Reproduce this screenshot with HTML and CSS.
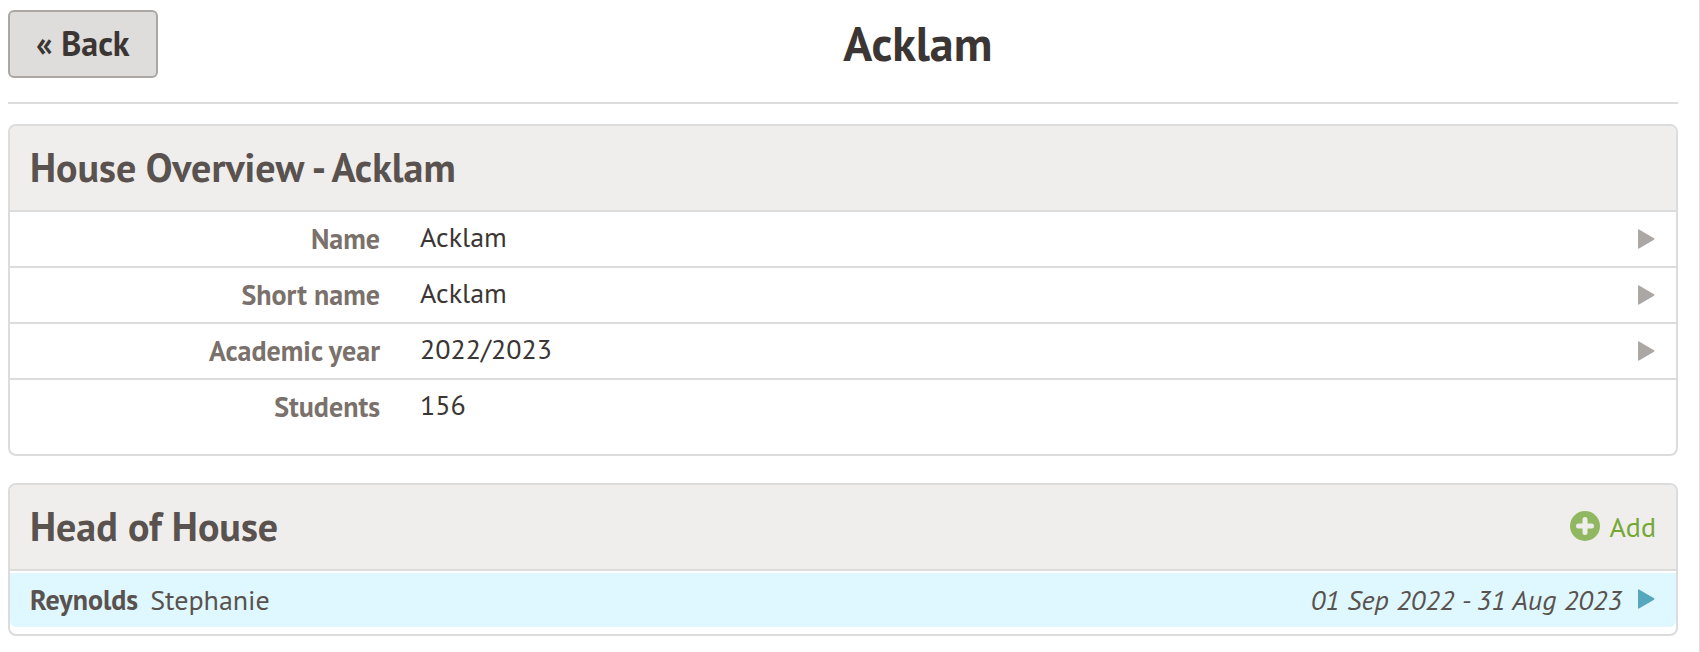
FILE: index.html
```html
<!DOCTYPE html>
<html lang="en">
<head>
    <meta charset="UTF-8">
    <meta name="viewport" content="width=device-width, initial-scale=1.0">
    <title>Acklam</title>
    <link rel="stylesheet" href="styles.css">
</head>
<body>
    <div class="page">
        <header class="page-header">
            <button type="button" class="back-btn">« Back</button>
            <h1>Acklam</h1>
        </header>

        <section class="panel">
            <div class="panel-header">
                <h2>House Overview - Acklam</h2>
            </div>
            <dl class="details">
                <div class="detail">
                    <dt>Name</dt>
                    <dd>Acklam</dd>
                    <dd class="action"><a href="#" aria-label="Edit name"><svg class="arrow" viewBox="0 0 17 20"><path d="M0 1Q0 0 1 .5L16 9.200Q17 10 16 10.800L1 19.500Q0 20 0 19Z"/></svg></a></dd>
                </div>
                <div class="detail">
                    <dt>Short name</dt>
                    <dd>Acklam</dd>
                    <dd class="action"><a href="#" aria-label="Edit short name"><svg class="arrow" viewBox="0 0 17 20"><path d="M0 1Q0 0 1 .5L16 9.200Q17 10 16 10.800L1 19.500Q0 20 0 19Z"/></svg></a></dd>
                </div>
                <div class="detail">
                    <dt>Academic year</dt>
                    <dd>2022/2023</dd>
                    <dd class="action"><a href="#" aria-label="Edit academic year"><svg class="arrow" viewBox="0 0 17 20"><path d="M0 1Q0 0 1 .5L16 9.200Q17 10 16 10.800L1 19.500Q0 20 0 19Z"/></svg></a></dd>
                </div>
                <div class="detail">
                    <dt>Students</dt>
                    <dd>156</dd>
                </div>
            </dl>
        </section>

        <section class="panel">
            <div class="panel-header">
                <h2>Head of House</h2>
                <a href="#" class="add-link">
                    <svg class="add-icon" viewBox="0 0 30 30">
                        <circle cx="15" cy="15" r="15"/>
                        <path d="M15 8.500V21.500M8.500 15H21.500"/>
                    </svg>
                    Add
                </a>
            </div>
            <a href="#" class="person">
                <strong>Reynolds</strong>
                <span>Stephanie</span>
                <em>01 Sep 2022 - 31 Aug 2023</em>
                <svg class="arrow" viewBox="0 0 17 20"><path d="M0 1Q0 0 1 .5L16 9.200Q17 10 16 10.800L1 19.500Q0 20 0 19Z"/></svg>
            </a>
        </section>
    </div>
</body>
</html>
```
FILE: styles.css
```css
* {
    box-sizing: border-box;
}
body {
    margin: 0;
    font-family: "PT Sans", Lato, sans-serif;
    font-size: 28px;
    color: #3b3633;
    background-color: #fff;
}
h1, h2, dl, dd {
    margin: 0;
}
a {
    text-decoration: none;
}
.page {
    min-height: 100vh;
    padding: 10px 21px 16px 8px;
    border-right: 1px solid #dcdcdc;
}
.page-header {
    display: flex;
    align-items: flex-start;
    padding-bottom: 24px;
    margin-bottom: 20px;
    border-bottom: 2px solid #dddcdc;
}
.page-header h1 {
    flex: 1;
    font-size: 48px;
    line-height: 66px;
    text-align: center;
}
.back-btn {
    height: 68px;
    padding: 0 26px 2px;
    font-family: inherit;
    font-size: 34px;
    font-weight: bold;
    color: #3b3633;
    background-color: #dedddb;
    border: 2px solid #aba7a5;
    border-radius: 6px;
    cursor: pointer;
}
.panel {
    border: 2px solid #dddcdc;
    border-radius: 8px;
}
.panel + .panel {
    margin-top: 27px;
}
.panel-header {
    display: flex;
    justify-content: space-between;
    padding: 0 20px 2px;
    background-color: #efeeec;
    border-bottom: 2px solid #dddcdc;
    border-radius: 6px 6px 0 0;
}
.panel-header h2 {
    font-size: 40px;
    line-height: 82px;
    color: #59524e;
}
.add-link {
    display: flex;
    align-items: center;
    gap: 9px;
    color: #74a834;
}
.add-icon {
    width: 30px;
    height: 30px;
    fill: #90b860;
}
.add-icon path {
    stroke: #efeeec;
    stroke-width: 5;
    stroke-linecap: round;
}
.details {
    padding-bottom: 20px;
}
.detail {
    display: flex;
    height: 54px;
}
.detail + .detail {
    height: 56px;
    border-top: 2px solid #dddcdc;
}
.detail dt {
    width: 370px;
    line-height: 54px;
    font-weight: bold;
    text-align: right;
    color: #7a716c;
}
.detail dd {
    margin-left: 40px;
    line-height: 50px;
}
.detail .action {
    display: flex;
    align-items: center;
    margin-left: auto;
    padding-right: 21px;
}
.arrow {
    display: block;
    width: 17px;
    height: 20px;
    fill: #aba7a5;
}
.person {
    display: flex;
    align-items: center;
    gap: 12px;
    height: 54px;
    margin: 2px 0 7px;
    padding: 0 21px 2px 20px;
    color: #59524e;
    background-color: #dff7fe;
    border-radius: 0 0 6px 6px;
}
.person em {
    margin-left: auto;
    margin-right: 4px;
}
.person .arrow {
    fill: #55a7bd;
}
```
